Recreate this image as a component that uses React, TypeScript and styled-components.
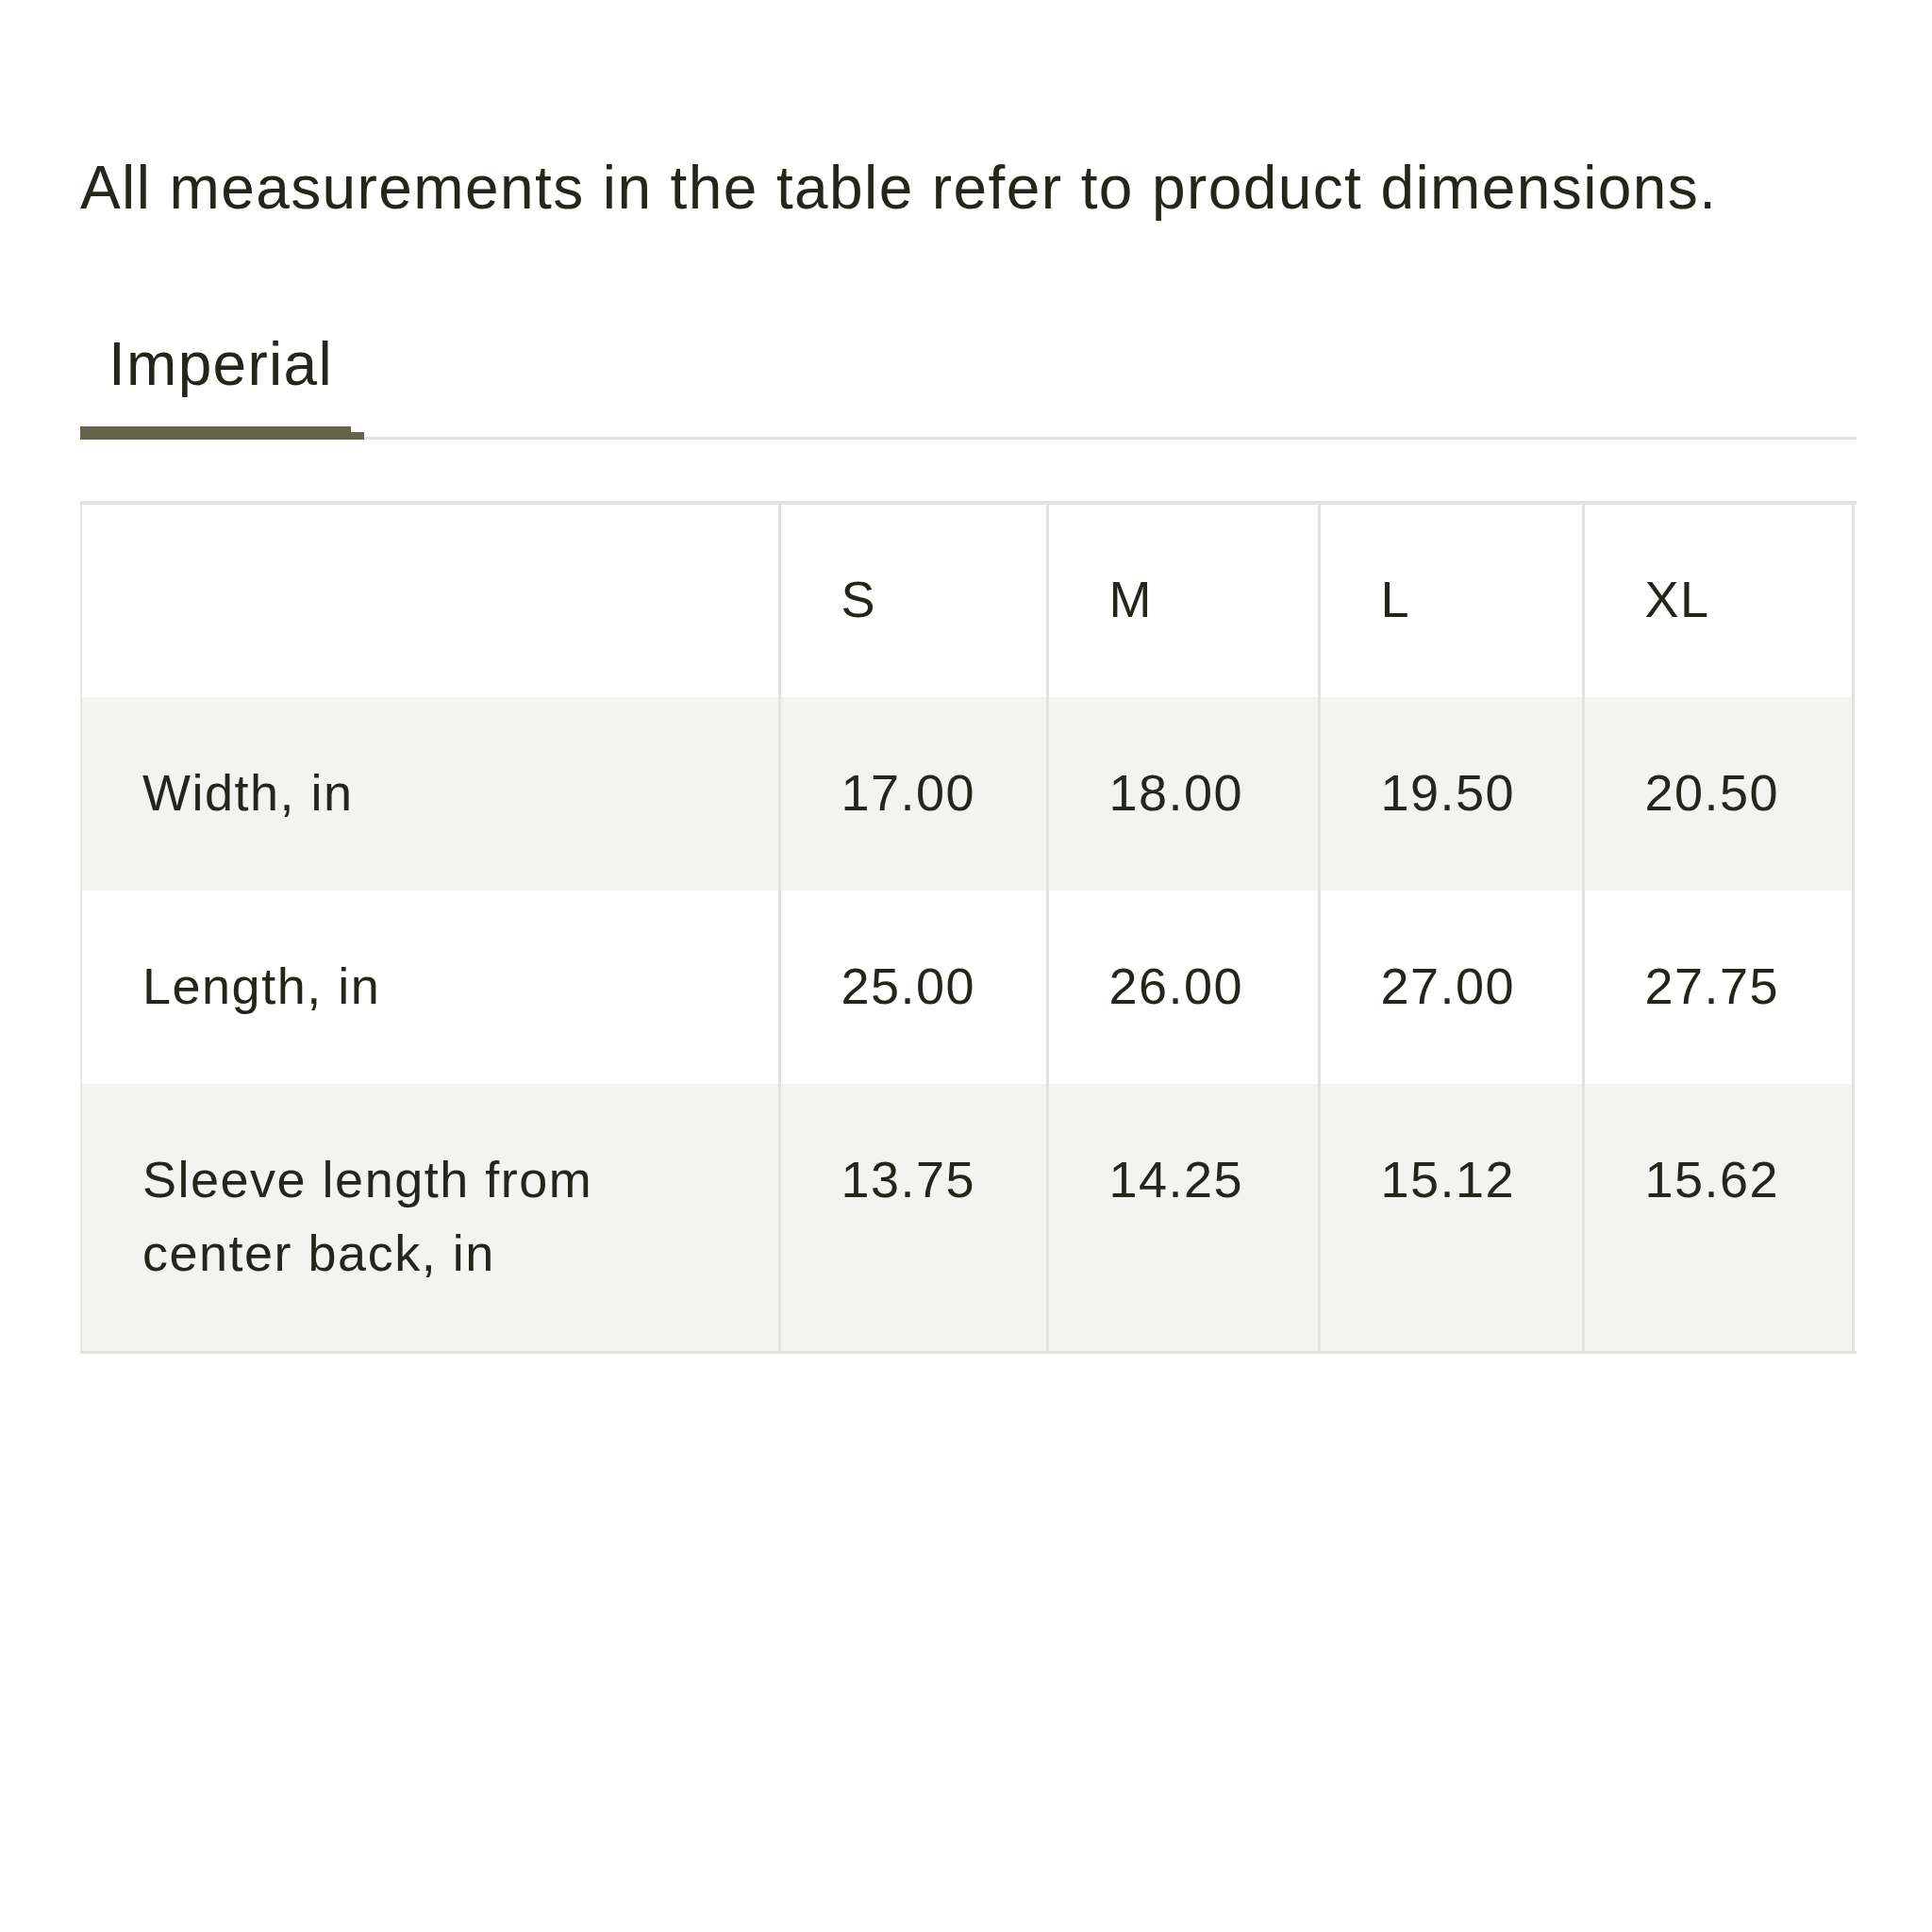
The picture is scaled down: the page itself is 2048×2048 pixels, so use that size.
import React from "react";
import styled, { createGlobalStyle } from "styled-components";

const Global = createGlobalStyle`
  html, body { margin: 0; padding: 0; background: #ffffff; }
  body { font-family: "Liberation Sans", Arial, sans-serif; color: #23261b; }
`;

const Page = styled.div`
  width: 1883px;
  padding: 161px 0 0 85px;
`;

const Intro = styled.p`
  margin: 0;
  font-size: 64px;
  line-height: 77px;
  letter-spacing: 1.4px;
  color: #23261b;
`;

const TabList = styled.div`
  display: flex;
  margin-top: 110px;
  border-bottom: 3px solid #e0e0dc;
`;

const Tab = styled.div<{ $active?: boolean }>`
  position: relative;
  padding: 0 33px 38px 30px;
  font-size: 64px;
  line-height: 77px;
  letter-spacing: 1.3px;
  color: #23261b;
  &::after {
    content: "";
    display: ${(p) => (p.$active ? "block" : "none")};
    position: absolute;
    left: 0;
    bottom: -3px;
    width: calc(100% - 14px);
    height: 14px;
    background: #65654c;
  }
  &::before {
    content: "";
    display: ${(p) => (p.$active ? "block" : "none")};
    position: absolute;
    right: 0;
    bottom: -3px;
    width: 14px;
    height: 8px;
    background: #65654c;
  }
`;

const TableFrame = styled.div`
  margin-top: 65px;
  width: 1883px;
  border-top: 4px solid #e2e2de;
  border-bottom: 3px solid #e2e2de;
`;

const Table = styled.table`
  width: 1878px;
  table-layout: fixed;
  border-collapse: collapse;
  border-left: 2px solid #e6e6e2;
`;

const Row = styled.tr<{ $striped?: boolean }>`
  background: ${(p) => (p.$striped ? "#f3f3ef" : "#ffffff")};
`;

const Cell = styled.td`
  padding: 62px 20px 65px 64px;
  font-size: 54px;
  line-height: 78px;
  letter-spacing: 1.5px;
  vertical-align: top;
  color: #23261b;
  border-right: 3px solid #e2e2de;
  text-align: left;
  font-weight: 400;
`;

const LabelCell = styled(Cell)`
  padding-right: 40px;
`;

const HeadCell = styled.th`
  padding: 61px 20px 65px 64px;
  font-size: 54px;
  line-height: 78px;
  letter-spacing: 1.5px;
  vertical-align: top;
  color: #23261b;
  border-right: 3px solid #e2e2de;
  text-align: left;
  font-weight: 400;
`;

const sizes = ["S", "M", "L", "XL"];
const rows = [
  { label: "Width, in", values: ["17.00", "18.00", "19.50", "20.50"] },
  { label: "Length, in", values: ["25.00", "26.00", "27.00", "27.75"] },
  { label: "Sleeve length from center back, in", values: ["13.75", "14.25", "15.12", "15.62"] },
];

export default function App() {
  return (
    <>
      <Global />
      <Page>
        <Intro>All measurements in the table refer to product dimensions.</Intro>
        <TabList>
          <Tab $active>Imperial</Tab>
        </TabList>
        <TableFrame>
          <Table>
            <colgroup>
              <col style={{ width: 740 }} />
              <col style={{ width: 284 }} />
              <col style={{ width: 288 }} />
              <col style={{ width: 280 }} />
              <col style={{ width: 286 }} />
            </colgroup>
            <thead>
              <Row>
                <HeadCell />
                {sizes.map((s) => (
                  <HeadCell key={s}>{s}</HeadCell>
                ))}
              </Row>
            </thead>
            <tbody>
              {rows.map((r, i) => (
                <Row key={r.label} $striped={i % 2 === 0}>
                  <LabelCell>{r.label}</LabelCell>
                  {r.values.map((v) => (
                    <Cell key={v}>{v}</Cell>
                  ))}
                </Row>
              ))}
            </tbody>
          </Table>
        </TableFrame>
      </Page>
    </>
  );
}
